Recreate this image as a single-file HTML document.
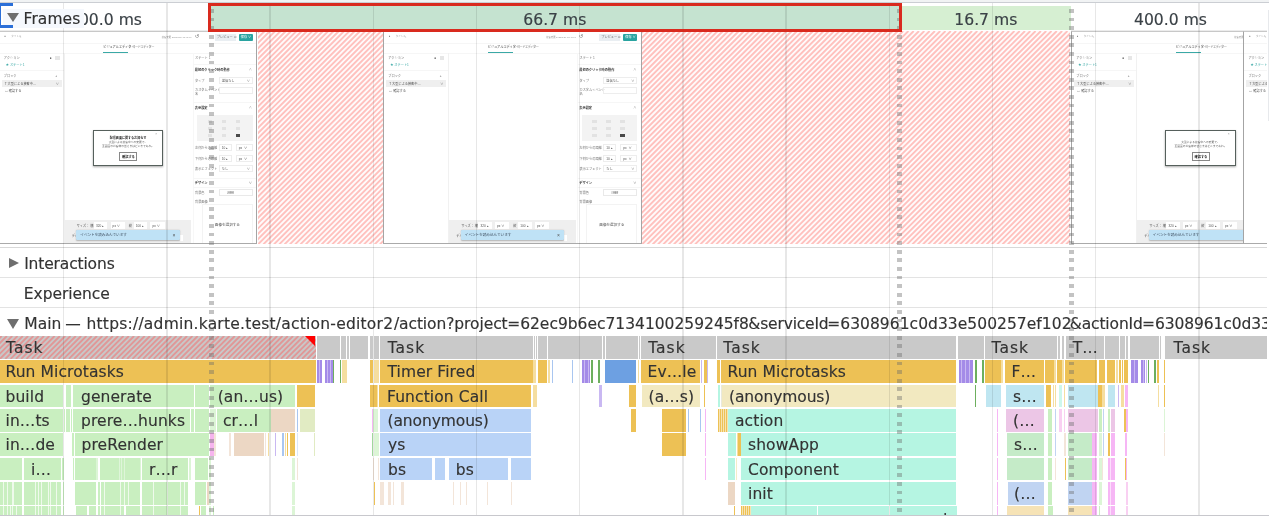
<!DOCTYPE html>
<html lang="ja"><head><meta charset="utf-8"><title>Performance</title>
<style>
html,body{margin:0;padding:0}
body{width:1269px;height:516px;overflow:hidden;position:relative;background:#fff;font-family:"DejaVu Sans","Liberation Sans",sans-serif;font-size:15.5px;color:#333;-webkit-text-stroke:.15px #333}
#r{position:absolute;left:0;top:0;width:1269px;height:516px;overflow:hidden;will-change:transform}
#r div,#r span.a{position:absolute;box-sizing:border-box}
.b{font-size:15.5px;line-height:25.8px;white-space:nowrap;overflow:hidden;letter-spacing:.1px}
.t{white-space:nowrap;line-height:20px;height:20px}
.hatch{background:repeating-linear-gradient(135deg,#fff8f7 0,#fff8f7 .4px,#ffbfba 1.6px,#ffbfba 2.15px,#fff8f7 3.35px,#fff8f7 3.75px)}
.gl{width:1.44px;background:rgba(0,0,0,.095)}
.th{-webkit-text-stroke:0;background:#fff;border:1px solid #a4a4a4;border-top-color:#c8c8c8;border-bottom-color:#aaa;overflow:hidden;font-family:"Liberation Sans","Noto Sans CJK JP",sans-serif;color:#555}
.th div{position:absolute}
.th .x{font-size:3.2px;line-height:4px;white-space:nowrap;color:#777}
</style></head>
<body><div id="r">
<div style="left:0.0px;top:0.0px;width:1269.0px;height:2.0px;background:#f1f3f4;"></div>
<div style="left:0.0px;top:1.9px;width:1269.0px;height:1.0px;background:#cbced3;"></div>
<div style="left:0.0px;top:30.1px;width:208.2px;height:1.0px;background:#ececec;"></div>
<div style="left:1071.0px;top:30.1px;width:198.0px;height:1.0px;background:#ececec;"></div>
<div style="left:208.2px;top:3.2px;width:693.6px;height:28.4px;background:#c5e3d0;"></div>
<div style="left:901.8px;top:6.2px;width:169.0px;height:24.3px;background:#d6efd2;"></div>
<div class="t" style="left:45.5px;width:120px;text-align:center;top:9.9px;font-size:15.6px;letter-spacing:0px;color:#3a4248">100.0 ms</div>
<div class="t" style="left:494.8px;width:120px;text-align:center;top:9.9px;font-size:15.6px;letter-spacing:0px;color:#3a4248">66.7 ms</div>
<div class="t" style="left:925.8px;width:120px;text-align:center;top:9.9px;font-size:15.6px;letter-spacing:0px;color:#3a4248">16.7 ms</div>
<div class="t" style="left:1110.5px;width:120px;text-align:center;top:9.9px;font-size:15.6px;letter-spacing:0px;color:#3a4248">400.0 ms</div>
<svg class="hs" style="position:absolute;left:257.8px;top:30.5px;background:#fffbfb;" width="125.7" height="213.4" viewBox="0 0 125.7 213.4"><path d="M-217.3 213.4l213.4-213.4M-212.0 213.4l213.4-213.4M-206.7 213.4l213.4-213.4M-201.4 213.4l213.4-213.4M-196.1 213.4l213.4-213.4M-190.8 213.4l213.4-213.4M-185.5 213.4l213.4-213.4M-180.2 213.4l213.4-213.4M-174.9 213.4l213.4-213.4M-169.6 213.4l213.4-213.4M-164.3 213.4l213.4-213.4M-159.0 213.4l213.4-213.4M-153.7 213.4l213.4-213.4M-148.4 213.4l213.4-213.4M-143.1 213.4l213.4-213.4M-137.8 213.4l213.4-213.4M-132.5 213.4l213.4-213.4M-127.2 213.4l213.4-213.4M-121.9 213.4l213.4-213.4M-116.6 213.4l213.4-213.4M-111.3 213.4l213.4-213.4M-106.0 213.4l213.4-213.4M-100.7 213.4l213.4-213.4M-95.4 213.4l213.4-213.4M-90.1 213.4l213.4-213.4M-84.8 213.4l213.4-213.4M-79.5 213.4l213.4-213.4M-74.2 213.4l213.4-213.4M-68.9 213.4l213.4-213.4M-63.6 213.4l213.4-213.4M-58.3 213.4l213.4-213.4M-53.0 213.4l213.4-213.4M-47.7 213.4l213.4-213.4M-42.4 213.4l213.4-213.4M-37.1 213.4l213.4-213.4M-31.8 213.4l213.4-213.4M-26.5 213.4l213.4-213.4M-21.2 213.4l213.4-213.4M-15.9 213.4l213.4-213.4M-10.6 213.4l213.4-213.4M-5.3 213.4l213.4-213.4M0.0 213.4l213.4-213.4M5.3 213.4l213.4-213.4M10.6 213.4l213.4-213.4M15.9 213.4l213.4-213.4M21.2 213.4l213.4-213.4M26.5 213.4l213.4-213.4M31.8 213.4l213.4-213.4M37.1 213.4l213.4-213.4M42.4 213.4l213.4-213.4M47.7 213.4l213.4-213.4M53.0 213.4l213.4-213.4M58.3 213.4l213.4-213.4M63.6 213.4l213.4-213.4M68.9 213.4l213.4-213.4M74.2 213.4l213.4-213.4M79.5 213.4l213.4-213.4M84.8 213.4l213.4-213.4M90.1 213.4l213.4-213.4M95.4 213.4l213.4-213.4M100.7 213.4l213.4-213.4M106.0 213.4l213.4-213.4M111.3 213.4l213.4-213.4M116.6 213.4l213.4-213.4M121.9 213.4l213.4-213.4M127.2 213.4l213.4-213.4" stroke="#ffc1be" stroke-width="1.9" fill="none"/></svg>
<svg class="hs" style="position:absolute;left:641.5px;top:30.5px;background:#fffbfb;" width="428.6" height="213.4" viewBox="0 0 428.6 213.4"><path d="M-217.3 213.4l213.4-213.4M-212.0 213.4l213.4-213.4M-206.7 213.4l213.4-213.4M-201.4 213.4l213.4-213.4M-196.1 213.4l213.4-213.4M-190.8 213.4l213.4-213.4M-185.5 213.4l213.4-213.4M-180.2 213.4l213.4-213.4M-174.9 213.4l213.4-213.4M-169.6 213.4l213.4-213.4M-164.3 213.4l213.4-213.4M-159.0 213.4l213.4-213.4M-153.7 213.4l213.4-213.4M-148.4 213.4l213.4-213.4M-143.1 213.4l213.4-213.4M-137.8 213.4l213.4-213.4M-132.5 213.4l213.4-213.4M-127.2 213.4l213.4-213.4M-121.9 213.4l213.4-213.4M-116.6 213.4l213.4-213.4M-111.3 213.4l213.4-213.4M-106.0 213.4l213.4-213.4M-100.7 213.4l213.4-213.4M-95.4 213.4l213.4-213.4M-90.1 213.4l213.4-213.4M-84.8 213.4l213.4-213.4M-79.5 213.4l213.4-213.4M-74.2 213.4l213.4-213.4M-68.9 213.4l213.4-213.4M-63.6 213.4l213.4-213.4M-58.3 213.4l213.4-213.4M-53.0 213.4l213.4-213.4M-47.7 213.4l213.4-213.4M-42.4 213.4l213.4-213.4M-37.1 213.4l213.4-213.4M-31.8 213.4l213.4-213.4M-26.5 213.4l213.4-213.4M-21.2 213.4l213.4-213.4M-15.9 213.4l213.4-213.4M-10.6 213.4l213.4-213.4M-5.3 213.4l213.4-213.4M0.0 213.4l213.4-213.4M5.3 213.4l213.4-213.4M10.6 213.4l213.4-213.4M15.9 213.4l213.4-213.4M21.2 213.4l213.4-213.4M26.5 213.4l213.4-213.4M31.8 213.4l213.4-213.4M37.1 213.4l213.4-213.4M42.4 213.4l213.4-213.4M47.7 213.4l213.4-213.4M53.0 213.4l213.4-213.4M58.3 213.4l213.4-213.4M63.6 213.4l213.4-213.4M68.9 213.4l213.4-213.4M74.2 213.4l213.4-213.4M79.5 213.4l213.4-213.4M84.8 213.4l213.4-213.4M90.1 213.4l213.4-213.4M95.4 213.4l213.4-213.4M100.7 213.4l213.4-213.4M106.0 213.4l213.4-213.4M111.3 213.4l213.4-213.4M116.6 213.4l213.4-213.4M121.9 213.4l213.4-213.4M127.2 213.4l213.4-213.4M132.5 213.4l213.4-213.4M137.8 213.4l213.4-213.4M143.1 213.4l213.4-213.4M148.4 213.4l213.4-213.4M153.7 213.4l213.4-213.4M159.0 213.4l213.4-213.4M164.3 213.4l213.4-213.4M169.6 213.4l213.4-213.4M174.9 213.4l213.4-213.4M180.2 213.4l213.4-213.4M185.5 213.4l213.4-213.4M190.8 213.4l213.4-213.4M196.1 213.4l213.4-213.4M201.4 213.4l213.4-213.4M206.7 213.4l213.4-213.4M212.0 213.4l213.4-213.4M217.3 213.4l213.4-213.4M222.6 213.4l213.4-213.4M227.9 213.4l213.4-213.4M233.2 213.4l213.4-213.4M238.5 213.4l213.4-213.4M243.8 213.4l213.4-213.4M249.1 213.4l213.4-213.4M254.4 213.4l213.4-213.4M259.7 213.4l213.4-213.4M265.0 213.4l213.4-213.4M270.3 213.4l213.4-213.4M275.6 213.4l213.4-213.4M280.9 213.4l213.4-213.4M286.2 213.4l213.4-213.4M291.5 213.4l213.4-213.4M296.8 213.4l213.4-213.4M302.1 213.4l213.4-213.4M307.4 213.4l213.4-213.4M312.7 213.4l213.4-213.4M318.0 213.4l213.4-213.4M323.3 213.4l213.4-213.4M328.6 213.4l213.4-213.4M333.9 213.4l213.4-213.4M339.2 213.4l213.4-213.4M344.5 213.4l213.4-213.4M349.8 213.4l213.4-213.4M355.1 213.4l213.4-213.4M360.4 213.4l213.4-213.4M365.7 213.4l213.4-213.4M371.0 213.4l213.4-213.4M376.3 213.4l213.4-213.4M381.6 213.4l213.4-213.4M386.9 213.4l213.4-213.4M392.2 213.4l213.4-213.4M397.5 213.4l213.4-213.4M402.8 213.4l213.4-213.4M408.1 213.4l213.4-213.4M413.4 213.4l213.4-213.4M418.7 213.4l213.4-213.4M424.0 213.4l213.4-213.4M429.3 213.4l213.4-213.4" stroke="#ffc1be" stroke-width="1.9" fill="none"/></svg>
<div class="th" style="left:-1.2px;top:31px;width:258.4px;height:212.6px"><div style="left:-1px;top:.1px;width:258.4px;height:212.5px;filter:blur(.3px)"><div class="x" style="left:5.5px;top:3px;color:#666;font-size:2.6px">●</div><div class="x" style="left:12.5px;top:3.2px;color:#aaa;font-size:2.5px">タイトル</div><div class="x" style="left:20.5px;top:3px;color:#bbb;font-size:3px">✎</div><div class="x" style="left:163px;top:3.4px;color:#999;font-size:2.3px">接客変更 2022/8/26 18:45:00</div><div class="x" style="left:196.2px;top:2.5px;font-size:4.5px;color:#666">↺</div><div style="left:216px;top:2px;width:21px;height:7px;background:#e9eef2"></div><div class="x" style="left:218px;top:3.3px;color:#666">プレビュー ✉</div><div style="left:239.8px;top:2px;width:14px;height:7px;background:#29a3a0;border-radius:1px"></div><div class="x" style="left:242px;top:3.3px;color:#fff">保存 ∨</div><div style="left:0;top:10.5px;width:258px;height:.6px;background:#f6f6f6"></div><div class="x" style="left:104.5px;top:13.2px;color:#444">ビジュアルエディター</div><div class="x" style="left:133.5px;top:13.2px;color:#777;letter-spacing:-.45px">コードエディター</div><div style="left:104.5px;top:19.6px;width:25px;height:.9px;background:#3aa9a6"></div><div style="left:0;top:21px;width:258px;height:.6px;background:#f6f6f6"></div><div style="left:65px;top:21px;width:.6px;height:191px;background:#f1f1f1"></div><div class="x" style="left:5px;top:24px">アクション</div><div class="x" style="left:51px;top:23.5px;color:#333">●</div><div style="left:56.5px;top:23.5px;width:4.5px;height:4.5px;background:#e6e6e6"></div><div class="x" style="left:7px;top:31.3px;color:#3aa9a6">★ ステート1</div><div style="left:0;top:38.3px;width:65px;height:.6px;background:#f6f6f6"></div><div class="x" style="left:5px;top:42px">ブロック</div><div class="x" style="left:56.5px;top:42px;color:#555">+</div><div style="left:3px;top:48.3px;width:60px;height:6.2px;background:#efefef"></div><div class="x" style="left:6px;top:49.5px;color:#555">T 大型による接客中…</div><div class="x" style="left:57px;top:49.5px">∨</div><div class="x" style="left:6px;top:57px;color:#555">▭ 確認する</div><div style="left:194px;top:21px;width:.6px;height:191px;background:#f7f7f7"></div><div class="x" style="left:196.2px;top:24px">ステート 1</div><div style="left:194px;top:32px;width:64px;height:.6px;background:#f6f6f6"></div><div class="x" style="left:196px;top:36px;color:#333;font-weight:bold">最初のクリック時の動作</div><div class="x" style="left:250px;top:36px">∧</div><div class="x" style="left:196.2px;top:46.5px">タイプ</div><div style="left:220px;top:44.5px;width:34px;height:7px;border:.5px solid #ededed"></div><div class="x" style="left:223px;top:46.5px;color:#555">送信なし</div><div class="x" style="left:248px;top:46.5px">∨</div><div class="x" style="left:196.2px;top:55.5px">カスタムイベント<br>名</div><div style="left:220px;top:54.5px;width:34px;height:7px;border:.5px solid #ededed"></div><div style="left:194px;top:70px;width:64px;height:.6px;background:#f6f6f6"></div><div class="x" style="left:196px;top:74px;color:#333;font-weight:bold">表示設定</div><div class="x" style="left:250px;top:74px">∧</div><div style="left:198.3px;top:83px;width:55.5px;height:26px;background:#f3f3f3"></div><div style="left:209px;top:88px;width:4.5px;height:3px;background:#e2e2e2"></div><div style="left:223px;top:88px;width:4.5px;height:3px;background:#e2e2e2"></div><div style="left:237px;top:88px;width:4.5px;height:3px;background:#e2e2e2"></div><div style="left:209px;top:95px;width:4.5px;height:3px;background:#e2e2e2"></div><div style="left:223px;top:95px;width:4.5px;height:3px;background:#e2e2e2"></div><div style="left:237px;top:95px;width:4.5px;height:3px;background:#e2e2e2"></div><div style="left:209px;top:102px;width:4.5px;height:3px;background:#e2e2e2"></div><div style="left:223px;top:102px;width:4.5px;height:3px;background:#e2e2e2"></div><div style="left:237px;top:102px;width:4.5px;height:3px;background:#4a4a4a"></div><div class="x" style="left:196.2px;top:114px">左側からの距離</div><div style="left:220px;top:112px;width:13px;height:7px;border:.5px solid #ededed"></div><div class="x" style="left:223px;top:114px;color:#555">10 ▴</div><div style="left:237px;top:112px;width:17px;height:7px;border:.5px solid #ededed"></div><div class="x" style="left:240px;top:114px;color:#555">px &nbsp;∨</div><div class="x" style="left:196.2px;top:124.5px">下側からの距離</div><div style="left:220px;top:122.5px;width:13px;height:7px;border:.5px solid #ededed"></div><div class="x" style="left:223px;top:124.5px;color:#555">10 ▴</div><div style="left:237px;top:122.5px;width:17px;height:7px;border:.5px solid #ededed"></div><div class="x" style="left:240px;top:124.5px;color:#555">px &nbsp;∨</div><div class="x" style="left:196.2px;top:135px">表示エフェクト</div><div style="left:220px;top:133px;width:34px;height:7px;border:.5px solid #ededed"></div><div class="x" style="left:223px;top:135px;color:#555">なし</div><div class="x" style="left:248px;top:135px">∨</div><div style="left:194px;top:146px;width:64px;height:.6px;background:#f6f6f6"></div><div class="x" style="left:196px;top:149px;color:#333;font-weight:bold">デザイン</div><div class="x" style="left:250px;top:149px">∨</div><div style="left:194px;top:155px;width:64px;height:.6px;background:#f6f6f6"></div><div class="x" style="left:196.2px;top:159px">背景色</div><div style="left:220px;top:157px;width:34px;height:7px;border:.5px solid #e9e9e9"></div><div class="x" style="left:228px;top:159px;color:#555">#ffffff</div><div class="x" style="left:196.2px;top:168px">背景画像</div><div style="left:203px;top:172px;width:51px;height:45px;border:.5px solid #f3f3f3"></div><div class="x" style="left:216px;top:191px;color:#555;font-size:3.6px">画像を選択する</div><div style="left:65.5px;top:188px;width:127px;height:25px;background:#efefef"></div><div class="x" style="left:78px;top:191.6px;color:#555">サイズ： 横</div><div style="left:95.2px;top:189.6px;width:13.3px;height:7px;background:#fff"></div><div class="x" style="left:97.2px;top:191.6px;color:#555">320 ▴</div><div style="left:111.8px;top:189.6px;width:14.4px;height:7px;background:#fff"></div><div class="x" style="left:113.8px;top:191.6px;color:#555">px ∨</div><div style="left:135px;top:189.6px;width:13.3px;height:7px;background:#fff"></div><div class="x" style="left:137px;top:191.6px;color:#555">100 ▴</div><div style="left:151.6px;top:189.6px;width:14.4px;height:7px;background:#fff"></div><div class="x" style="left:153.6px;top:191.6px;color:#555">px ∨</div><div class="x" style="left:130px;top:191.6px;color:#555">縦</div><div class="x" style="left:73px;top:202px;color:#555">デバイス</div><div style="left:181px;top:202.8px;width:3.2px;height:6.1px;background:#fff"></div><div style="left:77.5px;top:197.7px;width:103.3px;height:9.9px;background:#bfe2f6;border-radius:1.2px;box-shadow:0 .5px 1.5px rgba(0,0,0,.25)"></div><div class="x" style="left:81.5px;top:200.6px;color:#456;font-size:3.6px">イベントを読み込んでいます</div><div class="x" style="left:173.7px;top:199.8px;color:#555;font-size:5px;line-height:6px">×</div><div style="left:94.2px;top:97.8px;width:70.2px;height:36.6px;background:#fff;border:.9px solid #56605c;box-shadow:0 .5px 2px rgba(0,0,0,.35)"></div><div class="x" style="left:156.5px;top:100.2px;color:#999">×</div><div class="x" style="left:94.2px;width:70px;text-align:center;top:103.5px;color:#222;font-weight:bold;font-size:3.05px">配信画面に関するお知らせ</div><div class="x" style="left:94.2px;width:70px;text-align:center;top:109px;color:#666;font-size:2.75px;line-height:3.9px">大型による接客中への変更で、<br>全画面のお客様の皆さまはどこまであれ。</div><div style="left:120.6px;top:120.0px;width:18px;height:8.9px;border:.6px solid #888;background:#fff"></div><div class="x" style="left:120.6px;width:18px;text-align:center;top:122.6px;color:#222;font-weight:bold">確認する</div></div></div>
<div class="th" style="left:383.3px;top:31px;width:258.4px;height:212.6px"><div style="left:-1px;top:.1px;width:258.4px;height:212.5px;filter:blur(.3px)"><div class="x" style="left:5.5px;top:3px;color:#666;font-size:2.6px">●</div><div class="x" style="left:12.5px;top:3.2px;color:#aaa;font-size:2.5px">タイトル</div><div class="x" style="left:20.5px;top:3px;color:#bbb;font-size:3px">✎</div><div class="x" style="left:163px;top:3.4px;color:#999;font-size:2.3px">接客変更 2022/8/26 18:45:00</div><div class="x" style="left:196.2px;top:2.5px;font-size:4.5px;color:#666">↺</div><div style="left:216px;top:2px;width:21px;height:7px;background:#e9eef2"></div><div class="x" style="left:218px;top:3.3px;color:#666">プレビュー ✉</div><div style="left:239.8px;top:2px;width:14px;height:7px;background:#29a3a0;border-radius:1px"></div><div class="x" style="left:242px;top:3.3px;color:#fff">保存 ∨</div><div style="left:0;top:10.5px;width:258px;height:.6px;background:#f6f6f6"></div><div class="x" style="left:104.5px;top:13.2px;color:#444">ビジュアルエディター</div><div class="x" style="left:133.5px;top:13.2px;color:#777;letter-spacing:-.45px">コードエディター</div><div style="left:104.5px;top:19.6px;width:25px;height:.9px;background:#3aa9a6"></div><div style="left:0;top:21px;width:258px;height:.6px;background:#f6f6f6"></div><div style="left:65px;top:21px;width:.6px;height:191px;background:#f1f1f1"></div><div class="x" style="left:5px;top:24px">アクション</div><div class="x" style="left:51px;top:23.5px;color:#333">●</div><div style="left:56.5px;top:23.5px;width:4.5px;height:4.5px;background:#e6e6e6"></div><div class="x" style="left:7px;top:31.3px;color:#3aa9a6">★ ステート1</div><div style="left:0;top:38.3px;width:65px;height:.6px;background:#f6f6f6"></div><div class="x" style="left:5px;top:42px">ブロック</div><div class="x" style="left:56.5px;top:42px;color:#555">+</div><div style="left:3px;top:48.3px;width:60px;height:6.2px;background:#efefef"></div><div class="x" style="left:6px;top:49.5px;color:#555">T 大型による接客中…</div><div class="x" style="left:57px;top:49.5px">∨</div><div class="x" style="left:6px;top:57px;color:#555">▭ 確認する</div><div style="left:194px;top:21px;width:.6px;height:191px;background:#f7f7f7"></div><div class="x" style="left:196.2px;top:24px">ステート 1</div><div style="left:194px;top:32px;width:64px;height:.6px;background:#f6f6f6"></div><div class="x" style="left:196px;top:36px;color:#333;font-weight:bold">最初のクリック時の動作</div><div class="x" style="left:250px;top:36px">∧</div><div class="x" style="left:196.2px;top:46.5px">タイプ</div><div style="left:220px;top:44.5px;width:34px;height:7px;border:.5px solid #ededed"></div><div class="x" style="left:223px;top:46.5px;color:#555">送信なし</div><div class="x" style="left:248px;top:46.5px">∨</div><div class="x" style="left:196.2px;top:55.5px">カスタムイベント<br>名</div><div style="left:220px;top:54.5px;width:34px;height:7px;border:.5px solid #ededed"></div><div style="left:194px;top:70px;width:64px;height:.6px;background:#f6f6f6"></div><div class="x" style="left:196px;top:74px;color:#333;font-weight:bold">表示設定</div><div class="x" style="left:250px;top:74px">∧</div><div style="left:198.3px;top:83px;width:55.5px;height:26px;background:#f3f3f3"></div><div style="left:209px;top:88px;width:4.5px;height:3px;background:#e2e2e2"></div><div style="left:223px;top:88px;width:4.5px;height:3px;background:#e2e2e2"></div><div style="left:237px;top:88px;width:4.5px;height:3px;background:#e2e2e2"></div><div style="left:209px;top:95px;width:4.5px;height:3px;background:#e2e2e2"></div><div style="left:223px;top:95px;width:4.5px;height:3px;background:#e2e2e2"></div><div style="left:237px;top:95px;width:4.5px;height:3px;background:#e2e2e2"></div><div style="left:209px;top:102px;width:4.5px;height:3px;background:#e2e2e2"></div><div style="left:223px;top:102px;width:4.5px;height:3px;background:#e2e2e2"></div><div style="left:237px;top:102px;width:4.5px;height:3px;background:#4a4a4a"></div><div class="x" style="left:196.2px;top:114px">左側からの距離</div><div style="left:220px;top:112px;width:13px;height:7px;border:.5px solid #ededed"></div><div class="x" style="left:223px;top:114px;color:#555">10 ▴</div><div style="left:237px;top:112px;width:17px;height:7px;border:.5px solid #ededed"></div><div class="x" style="left:240px;top:114px;color:#555">px &nbsp;∨</div><div class="x" style="left:196.2px;top:124.5px">下側からの距離</div><div style="left:220px;top:122.5px;width:13px;height:7px;border:.5px solid #ededed"></div><div class="x" style="left:223px;top:124.5px;color:#555">10 ▴</div><div style="left:237px;top:122.5px;width:17px;height:7px;border:.5px solid #ededed"></div><div class="x" style="left:240px;top:124.5px;color:#555">px &nbsp;∨</div><div class="x" style="left:196.2px;top:135px">表示エフェクト</div><div style="left:220px;top:133px;width:34px;height:7px;border:.5px solid #ededed"></div><div class="x" style="left:223px;top:135px;color:#555">なし</div><div class="x" style="left:248px;top:135px">∨</div><div style="left:194px;top:146px;width:64px;height:.6px;background:#f6f6f6"></div><div class="x" style="left:196px;top:149px;color:#333;font-weight:bold">デザイン</div><div class="x" style="left:250px;top:149px">∨</div><div style="left:194px;top:155px;width:64px;height:.6px;background:#f6f6f6"></div><div class="x" style="left:196.2px;top:159px">背景色</div><div style="left:220px;top:157px;width:34px;height:7px;border:.5px solid #e9e9e9"></div><div class="x" style="left:228px;top:159px;color:#555">#ffffff</div><div class="x" style="left:196.2px;top:168px">背景画像</div><div style="left:203px;top:172px;width:51px;height:45px;border:.5px solid #f3f3f3"></div><div class="x" style="left:216px;top:191px;color:#555;font-size:3.6px">画像を選択する</div><div style="left:65.5px;top:188px;width:127px;height:25px;background:#efefef"></div><div class="x" style="left:78px;top:191.6px;color:#555">サイズ： 横</div><div style="left:95.2px;top:189.6px;width:13.3px;height:7px;background:#fff"></div><div class="x" style="left:97.2px;top:191.6px;color:#555">320 ▴</div><div style="left:111.8px;top:189.6px;width:14.4px;height:7px;background:#fff"></div><div class="x" style="left:113.8px;top:191.6px;color:#555">px ∨</div><div style="left:135px;top:189.6px;width:13.3px;height:7px;background:#fff"></div><div class="x" style="left:137px;top:191.6px;color:#555">100 ▴</div><div style="left:151.6px;top:189.6px;width:14.4px;height:7px;background:#fff"></div><div class="x" style="left:153.6px;top:191.6px;color:#555">px ∨</div><div class="x" style="left:130px;top:191.6px;color:#555">縦</div><div class="x" style="left:73px;top:202px;color:#555">デバイス</div><div style="left:181px;top:202.8px;width:3.2px;height:6.1px;background:#fff"></div><div style="left:77.5px;top:197.7px;width:103.3px;height:9.9px;background:#bfe2f6;border-radius:1.2px;box-shadow:0 .5px 1.5px rgba(0,0,0,.25)"></div><div class="x" style="left:81.5px;top:200.6px;color:#456;font-size:3.6px">イベントを読み込んでいます</div><div class="x" style="left:173.7px;top:199.8px;color:#555;font-size:5px;line-height:6px">×</div></div></div>
<div class="th" style="left:1071.3px;top:31px;width:258.4px;height:212.6px"><div style="left:-1px;top:.1px;width:258.4px;height:212.5px;filter:blur(.3px)"><div class="x" style="left:5.5px;top:3px;color:#666;font-size:2.6px">●</div><div class="x" style="left:12.5px;top:3.2px;color:#aaa;font-size:2.5px">タイトル</div><div class="x" style="left:20.5px;top:3px;color:#bbb;font-size:3px">✎</div><div class="x" style="left:163px;top:3.4px;color:#999;font-size:2.3px">接客変更 2022/8/26 18:45:00</div><div class="x" style="left:196.2px;top:2.5px;font-size:4.5px;color:#666">↺</div><div style="left:216px;top:2px;width:21px;height:7px;background:#e9eef2"></div><div class="x" style="left:218px;top:3.3px;color:#666">プレビュー ✉</div><div style="left:239.8px;top:2px;width:14px;height:7px;background:#29a3a0;border-radius:1px"></div><div class="x" style="left:242px;top:3.3px;color:#fff">保存 ∨</div><div style="left:0;top:10.5px;width:258px;height:.6px;background:#f6f6f6"></div><div class="x" style="left:104.5px;top:13.2px;color:#444">ビジュアルエディター</div><div class="x" style="left:133.5px;top:13.2px;color:#777;letter-spacing:-.45px">コードエディター</div><div style="left:104.5px;top:19.6px;width:25px;height:.9px;background:#3aa9a6"></div><div style="left:0;top:21px;width:258px;height:.6px;background:#f6f6f6"></div><div style="left:65px;top:21px;width:.6px;height:191px;background:#f1f1f1"></div><div class="x" style="left:5px;top:24px">アクション</div><div class="x" style="left:51px;top:23.5px;color:#333">●</div><div style="left:56.5px;top:23.5px;width:4.5px;height:4.5px;background:#e6e6e6"></div><div class="x" style="left:7px;top:31.3px;color:#3aa9a6">★ ステート1</div><div style="left:0;top:38.3px;width:65px;height:.6px;background:#f6f6f6"></div><div class="x" style="left:5px;top:42px">ブロック</div><div class="x" style="left:56.5px;top:42px;color:#555">+</div><div style="left:3px;top:48.3px;width:60px;height:6.2px;background:#efefef"></div><div class="x" style="left:6px;top:49.5px;color:#555">T 大型による接客中…</div><div class="x" style="left:57px;top:49.5px">∨</div><div class="x" style="left:6px;top:57px;color:#555">▭ 確認する</div><div style="left:194px;top:21px;width:.6px;height:191px;background:#f7f7f7"></div><div class="x" style="left:196.2px;top:24px">ステート 1</div><div style="left:194px;top:32px;width:64px;height:.6px;background:#f6f6f6"></div><div class="x" style="left:196px;top:36px;color:#333;font-weight:bold">最初のクリック時の動作</div><div class="x" style="left:250px;top:36px">∧</div><div class="x" style="left:196.2px;top:46.5px">タイプ</div><div style="left:220px;top:44.5px;width:34px;height:7px;border:.5px solid #ededed"></div><div class="x" style="left:223px;top:46.5px;color:#555">送信なし</div><div class="x" style="left:248px;top:46.5px">∨</div><div class="x" style="left:196.2px;top:55.5px">カスタムイベント<br>名</div><div style="left:220px;top:54.5px;width:34px;height:7px;border:.5px solid #ededed"></div><div style="left:194px;top:70px;width:64px;height:.6px;background:#f6f6f6"></div><div class="x" style="left:196px;top:74px;color:#333;font-weight:bold">表示設定</div><div class="x" style="left:250px;top:74px">∧</div><div style="left:198.3px;top:83px;width:55.5px;height:26px;background:#f3f3f3"></div><div style="left:209px;top:88px;width:4.5px;height:3px;background:#e2e2e2"></div><div style="left:223px;top:88px;width:4.5px;height:3px;background:#e2e2e2"></div><div style="left:237px;top:88px;width:4.5px;height:3px;background:#e2e2e2"></div><div style="left:209px;top:95px;width:4.5px;height:3px;background:#e2e2e2"></div><div style="left:223px;top:95px;width:4.5px;height:3px;background:#e2e2e2"></div><div style="left:237px;top:95px;width:4.5px;height:3px;background:#e2e2e2"></div><div style="left:209px;top:102px;width:4.5px;height:3px;background:#e2e2e2"></div><div style="left:223px;top:102px;width:4.5px;height:3px;background:#e2e2e2"></div><div style="left:237px;top:102px;width:4.5px;height:3px;background:#4a4a4a"></div><div class="x" style="left:196.2px;top:114px">左側からの距離</div><div style="left:220px;top:112px;width:13px;height:7px;border:.5px solid #ededed"></div><div class="x" style="left:223px;top:114px;color:#555">10 ▴</div><div style="left:237px;top:112px;width:17px;height:7px;border:.5px solid #ededed"></div><div class="x" style="left:240px;top:114px;color:#555">px &nbsp;∨</div><div class="x" style="left:196.2px;top:124.5px">下側からの距離</div><div style="left:220px;top:122.5px;width:13px;height:7px;border:.5px solid #ededed"></div><div class="x" style="left:223px;top:124.5px;color:#555">10 ▴</div><div style="left:237px;top:122.5px;width:17px;height:7px;border:.5px solid #ededed"></div><div class="x" style="left:240px;top:124.5px;color:#555">px &nbsp;∨</div><div class="x" style="left:196.2px;top:135px">表示エフェクト</div><div style="left:220px;top:133px;width:34px;height:7px;border:.5px solid #ededed"></div><div class="x" style="left:223px;top:135px;color:#555">なし</div><div class="x" style="left:248px;top:135px">∨</div><div style="left:194px;top:146px;width:64px;height:.6px;background:#f6f6f6"></div><div class="x" style="left:196px;top:149px;color:#333;font-weight:bold">デザイン</div><div class="x" style="left:250px;top:149px">∨</div><div style="left:194px;top:155px;width:64px;height:.6px;background:#f6f6f6"></div><div class="x" style="left:196.2px;top:159px">背景色</div><div style="left:220px;top:157px;width:34px;height:7px;border:.5px solid #e9e9e9"></div><div class="x" style="left:228px;top:159px;color:#555">#ffffff</div><div class="x" style="left:196.2px;top:168px">背景画像</div><div style="left:203px;top:172px;width:51px;height:45px;border:.5px solid #f3f3f3"></div><div class="x" style="left:216px;top:191px;color:#555;font-size:3.6px">画像を選択する</div><div style="left:65.5px;top:188px;width:127px;height:25px;background:#efefef"></div><div class="x" style="left:78px;top:191.6px;color:#555">サイズ： 横</div><div style="left:95.2px;top:189.6px;width:13.3px;height:7px;background:#fff"></div><div class="x" style="left:97.2px;top:191.6px;color:#555">320 ▴</div><div style="left:111.8px;top:189.6px;width:14.4px;height:7px;background:#fff"></div><div class="x" style="left:113.8px;top:191.6px;color:#555">px ∨</div><div style="left:135px;top:189.6px;width:13.3px;height:7px;background:#fff"></div><div class="x" style="left:137px;top:191.6px;color:#555">100 ▴</div><div style="left:151.6px;top:189.6px;width:14.4px;height:7px;background:#fff"></div><div class="x" style="left:153.6px;top:191.6px;color:#555">px ∨</div><div class="x" style="left:130px;top:191.6px;color:#555">縦</div><div class="x" style="left:73px;top:202px;color:#555">デバイス</div><div style="left:181px;top:202.8px;width:3.2px;height:6.1px;background:#fff"></div><div style="left:77.5px;top:197.7px;width:103.3px;height:9.9px;background:#bfe2f6;border-radius:1.2px;box-shadow:0 .5px 1.5px rgba(0,0,0,.25)"></div><div class="x" style="left:81.5px;top:200.6px;color:#456;font-size:3.6px">イベントを読み込んでいます</div><div class="x" style="left:173.7px;top:199.8px;color:#555;font-size:5px;line-height:6px">×</div><div style="left:94.2px;top:97.8px;width:70.2px;height:36.6px;background:#fff;border:.9px solid #56605c;box-shadow:0 .5px 2px rgba(0,0,0,.35)"></div><div class="x" style="left:156.5px;top:100.2px;color:#999">×</div><div class="x" style="left:94.2px;width:70px;text-align:center;top:109px;color:#666;font-size:2.75px;line-height:3.9px">大型による接客中への変更で、<br>全画面のお客様の皆さまはどこまであれ。</div><div style="left:120.6px;top:120.0px;width:18px;height:8.9px;border:.6px solid #888;background:#fff"></div><div class="x" style="left:120.6px;width:18px;text-align:center;top:122.6px;color:#222;font-weight:bold">確認する</div></div></div>
<div class="th" style="left:1243.4px;top:31px;width:258.4px;height:212.6px"><div style="left:-1px;top:.1px;width:258.4px;height:212.5px;filter:blur(.3px)"><div class="x" style="left:5.5px;top:3px;color:#666;font-size:2.6px">●</div><div class="x" style="left:12.5px;top:3.2px;color:#aaa;font-size:2.5px">タイトル</div><div class="x" style="left:20.5px;top:3px;color:#bbb;font-size:3px">✎</div><div class="x" style="left:163px;top:3.4px;color:#999;font-size:2.3px">接客変更 2022/8/26 18:45:00</div><div class="x" style="left:196.2px;top:2.5px;font-size:4.5px;color:#666">↺</div><div style="left:216px;top:2px;width:21px;height:7px;background:#e9eef2"></div><div class="x" style="left:218px;top:3.3px;color:#666">プレビュー ✉</div><div style="left:239.8px;top:2px;width:14px;height:7px;background:#29a3a0;border-radius:1px"></div><div class="x" style="left:242px;top:3.3px;color:#fff">保存 ∨</div><div style="left:0;top:10.5px;width:258px;height:.6px;background:#f6f6f6"></div><div class="x" style="left:104.5px;top:13.2px;color:#444">ビジュアルエディター</div><div class="x" style="left:133.5px;top:13.2px;color:#777;letter-spacing:-.45px">コードエディター</div><div style="left:104.5px;top:19.6px;width:25px;height:.9px;background:#3aa9a6"></div><div style="left:0;top:21px;width:258px;height:.6px;background:#f6f6f6"></div><div style="left:65px;top:21px;width:.6px;height:191px;background:#f1f1f1"></div><div class="x" style="left:5px;top:24px">アクション</div><div class="x" style="left:51px;top:23.5px;color:#333">●</div><div style="left:56.5px;top:23.5px;width:4.5px;height:4.5px;background:#e6e6e6"></div><div class="x" style="left:7px;top:31.3px;color:#3aa9a6">★ ステート1</div><div style="left:0;top:38.3px;width:65px;height:.6px;background:#f6f6f6"></div><div class="x" style="left:5px;top:42px">ブロック</div><div class="x" style="left:56.5px;top:42px;color:#555">+</div><div style="left:3px;top:48.3px;width:60px;height:6.2px;background:#efefef"></div><div class="x" style="left:6px;top:49.5px;color:#555">T 大型による接客中…</div><div class="x" style="left:57px;top:49.5px">∨</div><div class="x" style="left:6px;top:57px;color:#555">▭ 確認する</div><div style="left:194px;top:21px;width:.6px;height:191px;background:#f7f7f7"></div><div class="x" style="left:196.2px;top:24px">ステート 1</div><div style="left:194px;top:32px;width:64px;height:.6px;background:#f6f6f6"></div><div class="x" style="left:196px;top:36px;color:#333;font-weight:bold">最初のクリック時の動作</div><div class="x" style="left:250px;top:36px">∧</div><div class="x" style="left:196.2px;top:46.5px">タイプ</div><div style="left:220px;top:44.5px;width:34px;height:7px;border:.5px solid #ededed"></div><div class="x" style="left:223px;top:46.5px;color:#555">送信なし</div><div class="x" style="left:248px;top:46.5px">∨</div><div class="x" style="left:196.2px;top:55.5px">カスタムイベント<br>名</div><div style="left:220px;top:54.5px;width:34px;height:7px;border:.5px solid #ededed"></div><div style="left:194px;top:70px;width:64px;height:.6px;background:#f6f6f6"></div><div class="x" style="left:196px;top:74px;color:#333;font-weight:bold">表示設定</div><div class="x" style="left:250px;top:74px">∧</div><div style="left:198.3px;top:83px;width:55.5px;height:26px;background:#f3f3f3"></div><div style="left:209px;top:88px;width:4.5px;height:3px;background:#e2e2e2"></div><div style="left:223px;top:88px;width:4.5px;height:3px;background:#e2e2e2"></div><div style="left:237px;top:88px;width:4.5px;height:3px;background:#e2e2e2"></div><div style="left:209px;top:95px;width:4.5px;height:3px;background:#e2e2e2"></div><div style="left:223px;top:95px;width:4.5px;height:3px;background:#e2e2e2"></div><div style="left:237px;top:95px;width:4.5px;height:3px;background:#e2e2e2"></div><div style="left:209px;top:102px;width:4.5px;height:3px;background:#e2e2e2"></div><div style="left:223px;top:102px;width:4.5px;height:3px;background:#e2e2e2"></div><div style="left:237px;top:102px;width:4.5px;height:3px;background:#4a4a4a"></div><div class="x" style="left:196.2px;top:114px">左側からの距離</div><div style="left:220px;top:112px;width:13px;height:7px;border:.5px solid #ededed"></div><div class="x" style="left:223px;top:114px;color:#555">10 ▴</div><div style="left:237px;top:112px;width:17px;height:7px;border:.5px solid #ededed"></div><div class="x" style="left:240px;top:114px;color:#555">px &nbsp;∨</div><div class="x" style="left:196.2px;top:124.5px">下側からの距離</div><div style="left:220px;top:122.5px;width:13px;height:7px;border:.5px solid #ededed"></div><div class="x" style="left:223px;top:124.5px;color:#555">10 ▴</div><div style="left:237px;top:122.5px;width:17px;height:7px;border:.5px solid #ededed"></div><div class="x" style="left:240px;top:124.5px;color:#555">px &nbsp;∨</div><div class="x" style="left:196.2px;top:135px">表示エフェクト</div><div style="left:220px;top:133px;width:34px;height:7px;border:.5px solid #ededed"></div><div class="x" style="left:223px;top:135px;color:#555">なし</div><div class="x" style="left:248px;top:135px">∨</div><div style="left:194px;top:146px;width:64px;height:.6px;background:#f6f6f6"></div><div class="x" style="left:196px;top:149px;color:#333;font-weight:bold">デザイン</div><div class="x" style="left:250px;top:149px">∨</div><div style="left:194px;top:155px;width:64px;height:.6px;background:#f6f6f6"></div><div class="x" style="left:196.2px;top:159px">背景色</div><div style="left:220px;top:157px;width:34px;height:7px;border:.5px solid #e9e9e9"></div><div class="x" style="left:228px;top:159px;color:#555">#ffffff</div><div class="x" style="left:196.2px;top:168px">背景画像</div><div style="left:203px;top:172px;width:51px;height:45px;border:.5px solid #f3f3f3"></div><div class="x" style="left:216px;top:191px;color:#555;font-size:3.6px">画像を選択する</div><div style="left:65.5px;top:188px;width:127px;height:25px;background:#efefef"></div><div class="x" style="left:78px;top:191.6px;color:#555">サイズ： 横</div><div style="left:95.2px;top:189.6px;width:13.3px;height:7px;background:#fff"></div><div class="x" style="left:97.2px;top:191.6px;color:#555">320 ▴</div><div style="left:111.8px;top:189.6px;width:14.4px;height:7px;background:#fff"></div><div class="x" style="left:113.8px;top:191.6px;color:#555">px ∨</div><div style="left:135px;top:189.6px;width:13.3px;height:7px;background:#fff"></div><div class="x" style="left:137px;top:191.6px;color:#555">100 ▴</div><div style="left:151.6px;top:189.6px;width:14.4px;height:7px;background:#fff"></div><div class="x" style="left:153.6px;top:191.6px;color:#555">px ∨</div><div class="x" style="left:130px;top:191.6px;color:#555">縦</div><div class="x" style="left:73px;top:202px;color:#555">デバイス</div><div style="left:181px;top:202.8px;width:3.2px;height:6.1px;background:#fff"></div><div style="left:77.5px;top:197.7px;width:103.3px;height:9.9px;background:#bfe2f6;border-radius:1.2px;box-shadow:0 .5px 1.5px rgba(0,0,0,.25)"></div><div class="x" style="left:81.5px;top:200.6px;color:#456;font-size:3.6px">イベントを読み込んでいます</div><div class="x" style="left:173.7px;top:199.8px;color:#555;font-size:5px;line-height:6px">×</div><div style="left:94.2px;top:97.8px;width:70.2px;height:36.6px;background:#fff;border:.9px solid #56605c;box-shadow:0 .5px 2px rgba(0,0,0,.35)"></div><div class="x" style="left:156.5px;top:100.2px;color:#999">×</div><div class="x" style="left:94.2px;width:70px;text-align:center;top:109px;color:#666;font-size:2.75px;line-height:3.9px">大型による接客中への変更で、<br>全画面のお客様の皆さまはどこまであれ。</div><div style="left:120.6px;top:120.0px;width:18px;height:8.9px;border:.6px solid #888;background:#fff"></div><div class="x" style="left:120.6px;width:18px;text-align:center;top:122.6px;color:#222;font-weight:bold">確認する</div></div></div>
<div style="left:0.0px;top:243.6px;width:1269.0px;height:3.2px;background:#fff;"></div>
<div style="left:0.0px;top:247.0px;width:1269.0px;height:1.0px;background:#dedede;"></div>
<div style="left:0.0px;top:277.0px;width:1269.0px;height:1.0px;background:#dedede;"></div>
<div style="left:0.0px;top:307.0px;width:1269.0px;height:1.0px;background:#dedede;"></div>
<div style="left:0.0px;top:248.0px;width:1269.0px;height:88.0px;background:#fff;"></div>
<div style="left:0.0px;top:277.0px;width:1269.0px;height:1.0px;background:#e3e3e3;"></div>
<div style="left:0.0px;top:307.0px;width:1269.0px;height:1.0px;background:#e3e3e3;"></div>
<div style="left:0.0px;top:246.8px;width:1269.0px;height:1.0px;background:#d8d8d8;"></div>
<div style="left:8.9px;top:258.1px;width:0;height:0;border-left:10px solid #6e6e6e;border-top:5.2px solid transparent;border-bottom:5.2px solid transparent"></div>
<div class="t" style="left:24.2px;top:254px;letter-spacing:-.15px">Interactions</div>
<div class="t" style="left:23.8px;top:284px;letter-spacing:-.05px">Experience</div>
<div style="left:7.0px;top:318.5px;width:0;height:0;border-top:10.2px solid #6e6e6e;border-left:6.2px solid transparent;border-right:6.2px solid transparent"></div>
<div class="t" id="main" style="left:0;top:314.2px;width:1400px;font-size:15.5px"><span class="a" style="left:24.2px;letter-spacing:0.067px">Main</span><span class="a" style="left:65.2px;letter-spacing:0.000px">—</span><span class="a" style="left:86.5px;letter-spacing:0.226px">https://admin.karte.test/action-editor2</span><span class="a" style="left:393.9px;letter-spacing:-0.086px">/action?project</span><span class="a" style="left:507.2px;letter-spacing:-0.008px">=62ec9b6ec7134100259245f8</span><span class="a" style="left:748.3px;letter-spacing:-0.178px">&amp;serviceId</span><span class="a" style="left:827.2px;letter-spacing:0.046px">=6308961c0d33e500257ef102</span><span class="a" style="left:1069.7px;letter-spacing:-0.125px">&amp;actionId</span><span class="a" style="left:1142.0px;letter-spacing:-0.083px">=6308961c0d33</span></div>
<svg class="hs" style="position:absolute;left:0.0px;top:335.9px;background:#c9c8c8;" width="315.8" height="22.8" viewBox="0 0 315.8 22.8"><path d="M-26.5 22.8l22.8-22.8M-21.2 22.8l22.8-22.8M-15.9 22.8l22.8-22.8M-10.6 22.8l22.8-22.8M-5.3 22.8l22.8-22.8M0.0 22.8l22.8-22.8M5.3 22.8l22.8-22.8M10.6 22.8l22.8-22.8M15.9 22.8l22.8-22.8M21.2 22.8l22.8-22.8M26.5 22.8l22.8-22.8M31.8 22.8l22.8-22.8M37.1 22.8l22.8-22.8M42.4 22.8l22.8-22.8M47.7 22.8l22.8-22.8M53.0 22.8l22.8-22.8M58.3 22.8l22.8-22.8M63.6 22.8l22.8-22.8M68.9 22.8l22.8-22.8M74.2 22.8l22.8-22.8M79.5 22.8l22.8-22.8M84.8 22.8l22.8-22.8M90.1 22.8l22.8-22.8M95.4 22.8l22.8-22.8M100.7 22.8l22.8-22.8M106.0 22.8l22.8-22.8M111.3 22.8l22.8-22.8M116.6 22.8l22.8-22.8M121.9 22.8l22.8-22.8M127.2 22.8l22.8-22.8M132.5 22.8l22.8-22.8M137.8 22.8l22.8-22.8M143.1 22.8l22.8-22.8M148.4 22.8l22.8-22.8M153.7 22.8l22.8-22.8M159.0 22.8l22.8-22.8M164.3 22.8l22.8-22.8M169.6 22.8l22.8-22.8M174.9 22.8l22.8-22.8M180.2 22.8l22.8-22.8M185.5 22.8l22.8-22.8M190.8 22.8l22.8-22.8M196.1 22.8l22.8-22.8M201.4 22.8l22.8-22.8M206.7 22.8l22.8-22.8M212.0 22.8l22.8-22.8M217.3 22.8l22.8-22.8M222.6 22.8l22.8-22.8M227.9 22.8l22.8-22.8M233.2 22.8l22.8-22.8M238.5 22.8l22.8-22.8M243.8 22.8l22.8-22.8M249.1 22.8l22.8-22.8M254.4 22.8l22.8-22.8M259.7 22.8l22.8-22.8M265.0 22.8l22.8-22.8M270.3 22.8l22.8-22.8M275.6 22.8l22.8-22.8M280.9 22.8l22.8-22.8M286.2 22.8l22.8-22.8M291.5 22.8l22.8-22.8M296.8 22.8l22.8-22.8M302.1 22.8l22.8-22.8M307.4 22.8l22.8-22.8M312.7 22.8l22.8-22.8M318.0 22.8l22.8-22.8" stroke="#e09797" stroke-width="1.9" fill="none"/></svg>
<div class="b" style="left:0;top:335.9px;width:315.8px;height:22.8px;padding-left:6px;letter-spacing:1px">Task</div>
<div style="left:305.3px;top:335.9px;width:0;height:0;border-top:10.5px solid #f00;border-left:10.5px solid transparent"></div>
<div style="left:316.5px;top:335.9px;width:23.8px;height:22.8px;background:#c9c9c9;"></div>
<div style="left:341.0px;top:335.9px;width:1.5px;height:22.8px;background:#c9c9c9;"></div>
<div style="left:343.2px;top:335.9px;width:2.6px;height:22.8px;background:#c9c9c9;"></div>
<div style="left:346.8px;top:335.9px;width:2.2px;height:22.8px;background:#c9c9c9;"></div>
<div style="left:349.8px;top:335.9px;width:18.1px;height:22.8px;background:#c9c9c9;"></div>
<div style="left:369.9px;top:335.9px;width:3.0px;height:22.8px;background:#c9c9c9;"></div>
<div style="left:373.7px;top:335.9px;width:5.0px;height:22.8px;background:#c9c9c9;"></div>
<div class="b" style="left:379.7px;top:335.9px;width:152.9px;height:22.8px;background:#c9c9c9;padding-left:8.0px;letter-spacing:1.0px">Task</div>
<div style="left:533.5px;top:335.9px;width:1.5px;height:22.8px;background:#c9c9c9;"></div>
<div style="left:535.8px;top:335.9px;width:1.4px;height:22.8px;background:#c9c9c9;"></div>
<div style="left:538.0px;top:335.9px;width:9.0px;height:22.8px;background:#c9c9c9;"></div>
<div style="left:548.0px;top:335.9px;width:53.5px;height:22.8px;background:#c9c9c9;"></div>
<div style="left:602.5px;top:335.9px;width:2.0px;height:22.8px;background:#c9c9c9;"></div>
<div style="left:605.5px;top:335.9px;width:32.5px;height:22.8px;background:#c9c9c9;"></div>
<div style="left:639.0px;top:335.9px;width:1.2px;height:22.8px;background:#c9c9c9;"></div>
<div class="b" style="left:641.0px;top:335.9px;width:74.5px;height:22.8px;background:#c9c9c9;padding-left:7.2px;letter-spacing:1.0px">Task</div>
<div class="b" style="left:716.5px;top:335.9px;width:239.0px;height:22.8px;background:#c9c9c9;padding-left:6.8px;letter-spacing:1.0px">Task</div>
<div style="left:957.5px;top:335.9px;width:26.0px;height:22.8px;background:#c9c9c9;"></div>
<div class="b" style="left:985.0px;top:335.9px;width:71.5px;height:22.8px;background:#c9c9c9;padding-left:6.5px;letter-spacing:1.0px">Task</div>
<div style="left:1057.8px;top:335.9px;width:2.7px;height:22.8px;background:#c9c9c9;"></div>
<div style="left:1061.5px;top:335.9px;width:2.8px;height:22.8px;background:#c9c9c9;"></div>
<div class="b" style="left:1065.5px;top:335.9px;width:38.5px;height:22.8px;background:#c9c9c9;padding-left:7.2px">T…</div>
<div style="left:1105.0px;top:335.9px;width:11.5px;height:22.8px;background:#c9c9c9;"></div>
<div style="left:1117.3px;top:335.9px;width:1.7px;height:22.8px;background:#c9c9c9;"></div>
<div style="left:1120.0px;top:335.9px;width:2.5px;height:22.8px;background:#c9c9c9;"></div>
<div style="left:1123.3px;top:335.9px;width:1.7px;height:22.8px;background:#c9c9c9;"></div>
<div style="left:1125.8px;top:335.9px;width:2.7px;height:22.8px;background:#c9c9c9;"></div>
<div style="left:1129.5px;top:335.9px;width:27.0px;height:22.8px;background:#c9c9c9;"></div>
<div style="left:1157.3px;top:335.9px;width:1.7px;height:22.8px;background:#c9c9c9;"></div>
<div style="left:1159.8px;top:335.9px;width:1.7px;height:22.8px;background:#c9c9c9;"></div>
<div class="b" style="left:1164.5px;top:335.9px;width:102.0px;height:22.8px;background:#c9c9c9;padding-left:9.1px;letter-spacing:1.0px">Task</div>
<div class="b" style="left:0.0px;top:360.2px;width:315.8px;height:22.8px;background:#edc155;padding-left:5.5px">Run Microtasks</div>
<div style="left:317.2px;top:360.2px;width:1.8px;height:22.8px;background:#a48be8;"></div>
<div style="left:319.0px;top:360.2px;width:1.0px;height:22.8px;background:#c9b8f2;"></div>
<div style="left:320.0px;top:360.2px;width:2.1px;height:22.8px;background:#a48be8;"></div>
<div style="left:325.0px;top:360.2px;width:2.0px;height:22.8px;background:#a48be8;"></div>
<div style="left:327.0px;top:360.2px;width:1.0px;height:22.8px;background:#c9b8f2;"></div>
<div style="left:328.0px;top:360.2px;width:2.0px;height:22.8px;background:#a48be8;"></div>
<div style="left:330.0px;top:360.2px;width:1.0px;height:22.8px;background:#c9b8f2;"></div>
<div style="left:331.0px;top:360.2px;width:1.6px;height:22.8px;background:#a48be8;"></div>
<div style="left:333.0px;top:360.2px;width:1.0px;height:22.8px;background:#6daf5e;"></div>
<div style="left:339.5px;top:360.2px;width:1.1px;height:22.8px;background:#6daf5e;"></div>
<div style="left:341.5px;top:360.2px;width:2.0px;height:22.8px;background:#f5dea0;"></div>
<div style="left:344.0px;top:360.2px;width:2.5px;height:22.8px;background:#f5dea0;"></div>
<div style="left:370.0px;top:360.2px;width:3.0px;height:22.8px;background:#edc155;"></div>
<div style="left:373.7px;top:360.2px;width:5.0px;height:22.8px;background:#f5dea0;"></div>
<div class="b" style="left:379.7px;top:360.2px;width:152.9px;height:22.8px;background:#edc155;padding-left:7.8px">Timer Fired</div>
<div style="left:533.3px;top:360.2px;width:3.2px;height:22.8px;background:#f5dea0;"></div>
<div style="left:537.5px;top:360.2px;width:9.5px;height:22.8px;background:#edc155;"></div>
<div style="left:548.3px;top:360.2px;width:1.7px;height:22.8px;background:#f5dea0;"></div>
<div style="left:551.8px;top:360.2px;width:1.0px;height:22.8px;background:#a9c6f0;"></div>
<div style="left:572.0px;top:360.2px;width:1.0px;height:22.8px;background:#a9c6f0;"></div>
<div style="left:582.0px;top:360.2px;width:2.0px;height:22.8px;background:#a48be8;"></div>
<div style="left:584.0px;top:360.2px;width:1.0px;height:22.8px;background:#c9b8f2;"></div>
<div style="left:585.0px;top:360.2px;width:3.0px;height:22.8px;background:#a48be8;"></div>
<div style="left:588.0px;top:360.2px;width:1.0px;height:22.8px;background:#c9b8f2;"></div>
<div style="left:589.0px;top:360.2px;width:1.3px;height:22.8px;background:#a48be8;"></div>
<div style="left:590.7px;top:360.2px;width:2.3px;height:22.8px;background:#6daf5e;"></div>
<div style="left:597.6px;top:360.2px;width:2.4px;height:22.8px;background:#6daf5e;"></div>
<div style="left:605.3px;top:360.2px;width:30.7px;height:22.8px;background:#6da0e2;"></div>
<div style="left:637.5px;top:360.2px;width:1.5px;height:22.8px;background:#f5dea0;"></div>
<div class="b" style="left:641.0px;top:360.2px;width:59.0px;height:22.8px;background:#edc155;padding-left:6.5px">Ev…le</div>
<div style="left:701.0px;top:360.2px;width:1.0px;height:22.8px;background:#c9b8f2;"></div>
<div style="left:704.0px;top:360.2px;width:2.6px;height:22.8px;background:#edc155;"></div>
<div style="left:707.3px;top:360.2px;width:1.0px;height:22.8px;background:#c9b8f2;"></div>
<div style="left:716.5px;top:360.2px;width:3.5px;height:22.8px;background:#edc155;"></div>
<div class="b" style="left:721.0px;top:360.2px;width:234.5px;height:22.8px;background:#edc155;padding-left:6.5px">Run Microtasks</div>
<div style="left:959.0px;top:360.2px;width:2.0px;height:22.8px;background:#a48be8;"></div>
<div style="left:961.0px;top:360.2px;width:1.0px;height:22.8px;background:#c9b8f2;"></div>
<div style="left:962.0px;top:360.2px;width:3.0px;height:22.8px;background:#a48be8;"></div>
<div style="left:965.0px;top:360.2px;width:1.0px;height:22.8px;background:#c9b8f2;"></div>
<div style="left:966.0px;top:360.2px;width:3.0px;height:22.8px;background:#a48be8;"></div>
<div style="left:969.0px;top:360.2px;width:1.0px;height:22.8px;background:#c9b8f2;"></div>
<div style="left:970.0px;top:360.2px;width:2.5px;height:22.8px;background:#a48be8;"></div>
<div style="left:975.0px;top:360.2px;width:2.2px;height:22.8px;background:#6daf5e;"></div>
<div style="left:982.0px;top:360.2px;width:2.0px;height:22.8px;background:#6daf5e;"></div>
<div style="left:985.0px;top:360.2px;width:16.0px;height:22.8px;background:#edc155;"></div>
<div style="left:1001.0px;top:360.2px;width:2.0px;height:22.8px;background:#f5dea0;"></div>
<div class="b" style="left:1005.0px;top:360.2px;width:38.5px;height:22.8px;background:#edc155;padding-left:6.5px">F…</div>
<div style="left:1045.0px;top:360.2px;width:9.0px;height:22.8px;background:#edc155;"></div>
<div style="left:1054.0px;top:360.2px;width:2.0px;height:22.8px;background:#f5dea0;"></div>
<div style="left:1057.0px;top:360.2px;width:4.5px;height:22.8px;background:#edc155;"></div>
<div style="left:1062.0px;top:360.2px;width:1.5px;height:22.8px;background:#f5dea0;"></div>
<div style="left:1064.5px;top:360.2px;width:32.5px;height:22.8px;background:#edc155;"></div>
<div style="left:1098.5px;top:360.2px;width:6.5px;height:22.8px;background:#edc155;"></div>
<div style="left:1106.5px;top:360.2px;width:8.0px;height:22.8px;background:#edc155;"></div>
<div style="left:1116.0px;top:360.2px;width:2.0px;height:22.8px;background:#f5dea0;"></div>
<div style="left:1119.0px;top:360.2px;width:2.0px;height:22.8px;background:#edc155;"></div>
<div style="left:1122.0px;top:360.2px;width:1.0px;height:22.8px;background:#edc155;"></div>
<div style="left:1124.0px;top:360.2px;width:3.6px;height:22.8px;background:#edc155;"></div>
<div style="left:1131.0px;top:360.2px;width:2.5px;height:22.8px;background:#a48be8;"></div>
<div style="left:1133.5px;top:360.2px;width:1.0px;height:22.8px;background:#c9b8f2;"></div>
<div style="left:1134.5px;top:360.2px;width:3.1px;height:22.8px;background:#a48be8;"></div>
<div style="left:1141.0px;top:360.2px;width:2.0px;height:22.8px;background:#a48be8;"></div>
<div style="left:1143.0px;top:360.2px;width:1.0px;height:22.8px;background:#c9b8f2;"></div>
<div style="left:1144.0px;top:360.2px;width:1.2px;height:22.8px;background:#a48be8;"></div>
<div style="left:1145.6px;top:360.2px;width:0.8px;height:22.8px;background:#c9b8f2;"></div>
<div style="left:1147.8px;top:360.2px;width:1.2px;height:22.8px;background:#6daf5e;"></div>
<div style="left:1154.0px;top:360.2px;width:2.0px;height:22.8px;background:#6daf5e;"></div>
<div style="left:1156.5px;top:360.2px;width:2.5px;height:22.8px;background:#edc155;"></div>
<div style="left:1163.8px;top:360.2px;width:1.0px;height:22.8px;background:#edc155;"></div>
<div class="b" style="left:0.0px;top:384.6px;width:62.6px;height:22.8px;background:#c9efc0;padding-left:5.5px">build</div>
<div style="left:66.0px;top:384.6px;width:5.3px;height:22.8px;background:#c9efc0;"></div>
<div class="b" style="left:72.9px;top:384.6px;width:121.1px;height:22.8px;background:#c9efc0;padding-left:8.1px">generate</div>
<div style="left:195.0px;top:384.6px;width:13.8px;height:22.8px;background:#c9efc0;"></div>
<div class="b" style="left:209.5px;top:384.6px;width:85.1px;height:22.8px;background:#c9efc0;padding-left:8.2px">(an…us)</div>
<div style="left:297.3px;top:384.6px;width:17.5px;height:22.8px;background:#edc155;"></div>
<div style="left:370.0px;top:384.6px;width:6.5px;height:22.8px;background:#edc155;"></div>
<div style="left:377.2px;top:384.6px;width:0.8px;height:22.8px;background:#f5dea0;"></div>
<div class="b" style="left:378.5px;top:384.6px;width:152.5px;height:22.8px;background:#edc155;padding-left:8.5px">Function Call</div>
<div style="left:533.0px;top:384.6px;width:4.0px;height:22.8px;background:#f5dea0;"></div>
<div style="left:599.2px;top:384.6px;width:2.8px;height:22.8px;background:#c9b8f2;"></div>
<div style="left:629.0px;top:384.6px;width:7.0px;height:22.8px;background:#edc155;"></div>
<div class="b" style="left:642.0px;top:384.6px;width:58.0px;height:22.8px;background:#f2e9c0;padding-left:6.5px">(a…s)</div>
<div style="left:703.5px;top:384.6px;width:1.0px;height:22.8px;background:#edc155;"></div>
<div style="left:718.0px;top:384.6px;width:2.0px;height:22.8px;background:#b5f5e2;"></div>
<div style="left:720.5px;top:384.6px;width:1.0px;height:22.8px;background:#e9e9dc;"></div>
<div class="b" style="left:722.0px;top:384.6px;width:233.5px;height:22.8px;background:#f2e9c0;padding-left:7.0px;letter-spacing:-0.1px">(anonymous)</div>
<div style="left:975.0px;top:384.6px;width:1.0px;height:22.8px;background:#6daf5e;"></div>
<div style="left:986.0px;top:384.6px;width:15.0px;height:22.8px;background:#bfe6f1;"></div>
<div class="b" style="left:1006.0px;top:384.6px;width:38.0px;height:22.8px;background:#bfe6f1;padding-left:7.0px">s…</div>
<div style="left:1046.0px;top:384.6px;width:5.0px;height:22.8px;background:#edc155;"></div>
<div style="left:1053.0px;top:384.6px;width:1.0px;height:22.8px;background:#f5dea0;"></div>
<div style="left:1055.0px;top:384.6px;width:1.0px;height:22.8px;background:#f5dea0;"></div>
<div style="left:1059.0px;top:384.6px;width:2.5px;height:22.8px;background:#cdf7ec;"></div>
<div style="left:1063.5px;top:384.6px;width:1.5px;height:22.8px;background:#f5dea0;"></div>
<div style="left:1068.0px;top:384.6px;width:29.5px;height:22.8px;background:#bfe6f1;"></div>
<div style="left:1098.0px;top:384.6px;width:4.0px;height:22.8px;background:#edc155;"></div>
<div style="left:1102.0px;top:384.6px;width:3.0px;height:22.8px;background:#f5dea0;"></div>
<div style="left:1108.0px;top:384.6px;width:6.5px;height:22.8px;background:#bfe6f1;"></div>
<div style="left:1118.0px;top:384.6px;width:1.0px;height:22.8px;background:#c9b8f2;"></div>
<div style="left:1121.0px;top:384.6px;width:2.5px;height:22.8px;background:#f5dea0;"></div>
<div style="left:1125.0px;top:384.6px;width:2.6px;height:22.8px;background:#f6b6f5;"></div>
<div style="left:1158.0px;top:384.6px;width:0.8px;height:22.8px;background:#f5dea0;"></div>
<div style="left:1163.8px;top:384.6px;width:1.0px;height:22.8px;background:#edc155;"></div>
<div class="b" style="left:0.0px;top:408.9px;width:62.6px;height:22.8px;background:#c9efc0;padding-left:5.5px">in…ts</div>
<div style="left:63.6px;top:408.9px;width:1.4px;height:22.8px;background:#c9efc0;"></div>
<div style="left:66.0px;top:408.9px;width:4.0px;height:22.8px;background:#c9efc0;"></div>
<div style="left:71.0px;top:408.9px;width:1.0px;height:22.8px;background:#c9efc0;"></div>
<div class="b" style="left:72.9px;top:408.9px;width:117.1px;height:22.8px;background:#c9efc0;padding-left:8.1px">prere…hunks</div>
<div style="left:191.0px;top:408.9px;width:3.0px;height:22.8px;background:#c9efc0;"></div>
<div style="left:195.0px;top:408.9px;width:13.8px;height:22.8px;background:#c9efc0;"></div>
<div style="left:209.5px;top:408.9px;width:6.0px;height:22.8px;background:#dcf5d6;"></div>
<div class="b" style="left:216.5px;top:408.9px;width:51.0px;height:22.8px;background:#c9efc0;padding-left:6.5px">cr…l</div>
<div style="left:268.0px;top:408.9px;width:2.5px;height:22.8px;background:#c9efc0;"></div>
<div style="left:270.9px;top:408.9px;width:23.7px;height:22.8px;background:#ecd7c4;"></div>
<div style="left:296.6px;top:408.9px;width:1.0px;height:22.8px;background:#a9c6f0;"></div>
<div style="left:299.7px;top:408.9px;width:15.1px;height:22.8px;background:#e1ebc3;"></div>
<div style="left:371.5px;top:408.9px;width:1.1px;height:22.8px;background:#f6b6f5;"></div>
<div style="left:373.2px;top:408.9px;width:5.0px;height:22.8px;background:#dcf5d6;"></div>
<div class="b" style="left:380.0px;top:408.9px;width:151.0px;height:22.8px;background:#b9d3f7;padding-left:7.5px;letter-spacing:-0.1px">(anonymous)</div>
<div style="left:631.0px;top:408.9px;width:5.0px;height:22.8px;background:#edc155;"></div>
<div style="left:662.0px;top:408.9px;width:24.0px;height:22.8px;background:#edc155;"></div>
<div style="left:687.8px;top:408.9px;width:1.0px;height:22.8px;background:#a9c6f0;"></div>
<div style="left:699.5px;top:408.9px;width:1.1px;height:22.8px;background:#a9c6f0;"></div>
<div style="left:705.0px;top:408.9px;width:1.0px;height:22.8px;background:#f6b6f5;"></div>
<div style="left:718.0px;top:408.9px;width:1.3px;height:22.8px;background:#edc155;"></div>
<div style="left:719.9px;top:408.9px;width:1.3px;height:22.8px;background:#edc155;"></div>
<div style="left:721.8px;top:408.9px;width:1.3px;height:22.8px;background:#edc155;"></div>
<div style="left:723.7px;top:408.9px;width:1.3px;height:22.8px;background:#edc155;"></div>
<div style="left:725.6px;top:408.9px;width:1.3px;height:22.8px;background:#edc155;"></div>
<div style="left:718.0px;top:408.9px;width:9.8px;height:22.8px;background:rgba(237,193,85,.45);"></div>
<div class="b" style="left:728.0px;top:408.9px;width:227.5px;height:22.8px;background:#b5f5e2;padding-left:7.0px">action</div>
<div style="left:996.5px;top:408.9px;width:1.0px;height:22.8px;background:#f6b6f5;"></div>
<div class="b" style="left:1006.0px;top:408.9px;width:38.0px;height:22.8px;background:#ecc6e6;padding-left:7.0px">(…</div>
<div style="left:1048.0px;top:408.9px;width:3.5px;height:22.8px;background:#c9efc0;"></div>
<div style="left:1055.0px;top:408.9px;width:1.0px;height:22.8px;background:#c0d4f2;"></div>
<div style="left:1059.0px;top:408.9px;width:2.5px;height:22.8px;background:#f9d0f2;"></div>
<div style="left:1063.5px;top:408.9px;width:1.5px;height:22.8px;background:#f9d0f2;"></div>
<div style="left:1068.0px;top:408.9px;width:29.5px;height:22.8px;background:#ecc6e6;"></div>
<div style="left:1099.0px;top:408.9px;width:2.5px;height:22.8px;background:#c9efc0;"></div>
<div style="left:1102.5px;top:408.9px;width:1.0px;height:22.8px;background:#c0d4f2;"></div>
<div style="left:1108.0px;top:408.9px;width:2.0px;height:22.8px;background:#c9efc0;"></div>
<div style="left:1111.0px;top:408.9px;width:3.5px;height:22.8px;background:#ecc6e6;"></div>
<div style="left:1124.0px;top:408.9px;width:1.5px;height:22.8px;background:#edc155;"></div>
<div style="left:1125.5px;top:408.9px;width:2.1px;height:22.8px;background:#f6b6f5;"></div>
<div style="left:1163.8px;top:408.9px;width:1.0px;height:22.8px;background:#dcf5d6;"></div>
<div class="b" style="left:0.0px;top:433.2px;width:62.6px;height:22.8px;background:#c9efc0;padding-left:5.5px">in…de</div>
<div style="left:72.0px;top:433.2px;width:1.5px;height:22.8px;background:#c9efc0;"></div>
<div class="b" style="left:74.5px;top:433.2px;width:134.3px;height:22.8px;background:#c9efc0;padding-left:7.0px">preRender</div>
<div style="left:210.3px;top:433.2px;width:3.7px;height:22.8px;background:#f6b4ee;"></div>
<div style="left:214.3px;top:433.2px;width:1.3px;height:22.8px;background:#f3e5d9;"></div>
<div style="left:229.3px;top:433.2px;width:2.2px;height:22.8px;background:#f3e5d9;"></div>
<div style="left:233.8px;top:433.2px;width:30.2px;height:22.8px;background:#ecd7c4;"></div>
<div style="left:264.8px;top:433.2px;width:1.7px;height:22.8px;background:#f3e5d9;"></div>
<div style="left:268.0px;top:433.2px;width:1.2px;height:22.8px;background:#f5dea0;"></div>
<div style="left:275.0px;top:433.2px;width:1.2px;height:22.8px;background:#c9b8f2;"></div>
<div style="left:282.0px;top:433.2px;width:1.5px;height:22.8px;background:#a9c6f0;"></div>
<div style="left:285.0px;top:433.2px;width:1.0px;height:22.8px;background:#f5dea0;"></div>
<div style="left:286.5px;top:433.2px;width:1.3px;height:22.8px;background:#edc155;"></div>
<div style="left:289.5px;top:433.2px;width:5.1px;height:22.8px;background:#edc155;"></div>
<div style="left:296.6px;top:433.2px;width:1.0px;height:22.8px;background:#dbe7f8;"></div>
<div style="left:314.0px;top:433.2px;width:1.0px;height:22.8px;background:#e1ebc3;"></div>
<div style="left:372.0px;top:433.2px;width:1.4px;height:22.8px;background:#9fd79b;"></div>
<div style="left:374.0px;top:433.2px;width:4.5px;height:22.8px;background:#dcf5d6;"></div>
<div class="b" style="left:380.0px;top:433.2px;width:151.0px;height:22.8px;background:#b9d3f7;padding-left:8.0px">ys</div>
<div style="left:662.0px;top:433.2px;width:24.0px;height:22.8px;background:#edc155;"></div>
<div style="left:705.0px;top:433.2px;width:1.0px;height:22.8px;background:#f6b6f5;"></div>
<div style="left:728.0px;top:433.2px;width:8.0px;height:22.8px;background:#b5f5e2;"></div>
<div style="left:737.0px;top:433.2px;width:1.3px;height:22.8px;background:#f5dea0;"></div>
<div style="left:738.3px;top:433.2px;width:2.3px;height:22.8px;background:#edc155;"></div>
<div class="b" style="left:741.0px;top:433.2px;width:214.5px;height:22.8px;background:#b5f5e2;padding-left:7.0px">showApp</div>
<div style="left:996.5px;top:433.2px;width:1.0px;height:22.8px;background:#f6b6f5;"></div>
<div class="b" style="left:1006.5px;top:433.2px;width:37.5px;height:22.8px;background:#c5ebc8;padding-left:7.5px">s…</div>
<div style="left:1048.0px;top:433.2px;width:3.5px;height:22.8px;background:#c9efc0;"></div>
<div style="left:1055.0px;top:433.2px;width:1.0px;height:22.8px;background:#c0d4f2;"></div>
<div style="left:1064.0px;top:433.2px;width:1.5px;height:22.8px;background:#f3e5d9;"></div>
<div style="left:1068.0px;top:433.2px;width:23.5px;height:22.8px;background:#c5ebc8;"></div>
<div style="left:1092.0px;top:433.2px;width:5.2px;height:22.8px;background:#f6b6f5;"></div>
<div style="left:1099.0px;top:433.2px;width:2.5px;height:22.8px;background:#dcf5d6;"></div>
<div style="left:1102.5px;top:433.2px;width:1.0px;height:22.8px;background:#c0d4f2;"></div>
<div style="left:1108.0px;top:433.2px;width:2.0px;height:22.8px;background:#edc155;"></div>
<div style="left:1110.5px;top:433.2px;width:4.0px;height:22.8px;background:#f6b6f5;"></div>
<div style="left:1125.0px;top:433.2px;width:2.3px;height:22.8px;background:#f6b6f5;"></div>
<div style="left:1163.8px;top:433.2px;width:0.8px;height:22.8px;background:#f3e5d9;"></div>
<div style="left:0.0px;top:457.5px;width:22.0px;height:22.8px;background:#c9efc0;"></div>
<div class="b" style="left:24.4px;top:457.5px;width:37.1px;height:22.8px;background:#c9efc0;padding-left:6.6px">i…</div>
<div style="left:62.3px;top:457.5px;width:1.7px;height:22.8px;background:#c9efc0;"></div>
<div style="left:72.5px;top:457.5px;width:1.0px;height:22.8px;background:#c9efc0;"></div>
<div style="left:75.4px;top:457.5px;width:20.4px;height:22.8px;background:#c9efc0;"></div>
<div style="left:96.0px;top:457.5px;width:1.5px;height:22.8px;background:#dcf5d6;"></div>
<div style="left:99.5px;top:457.5px;width:40.3px;height:22.8px;background:#c9efc0;"></div>
<div style="left:140.4px;top:457.5px;width:0.8px;height:22.8px;background:#dcf5d6;"></div>
<div style="left:119.2px;top:457.5px;width:0.7px;height:22.8px;background:rgba(255,255,255,.4);"></div>
<div style="left:120.9px;top:457.5px;width:0.7px;height:22.8px;background:rgba(255,255,255,.4);"></div>
<div style="left:123.7px;top:457.5px;width:0.7px;height:22.8px;background:rgba(255,255,255,.4);"></div>
<div class="b" style="left:141.9px;top:457.5px;width:46.1px;height:22.8px;background:#c9efc0;padding-left:7.1px">r…r</div>
<div style="left:189.0px;top:457.5px;width:1.5px;height:22.8px;background:#dcf5d6;"></div>
<div style="left:195.3px;top:457.5px;width:13.2px;height:22.8px;background:#c9efc0;"></div>
<div style="left:209.4px;top:457.5px;width:1.2px;height:22.8px;background:#dcf5d6;"></div>
<div style="left:292.0px;top:457.5px;width:2.6px;height:22.8px;background:#dcf5d6;"></div>
<div style="left:296.5px;top:457.5px;width:1.0px;height:22.8px;background:#f3e5d9;"></div>
<div style="left:372.6px;top:457.5px;width:1.4px;height:22.8px;background:#f3e5d9;"></div>
<div style="left:377.5px;top:457.5px;width:1.5px;height:22.8px;background:#f3e5d9;"></div>
<div class="b" style="left:380.0px;top:457.5px;width:52.0px;height:22.8px;background:#b9d3f7;padding-left:8.0px">bs</div>
<div style="left:434.5px;top:457.5px;width:10.5px;height:22.8px;background:#b9d3f7;"></div>
<div class="b" style="left:448.7px;top:457.5px;width:59.3px;height:22.8px;background:#b9d3f7;padding-left:7.0px">bs</div>
<div style="left:510.5px;top:457.5px;width:20.5px;height:22.8px;background:#b9d3f7;"></div>
<div style="left:705.0px;top:457.5px;width:1.0px;height:22.8px;background:#f6b6f5;"></div>
<div style="left:728.0px;top:457.5px;width:6.6px;height:22.8px;background:#b5f5e2;"></div>
<div style="left:735.5px;top:457.5px;width:1.1px;height:22.8px;background:#f3edc9;"></div>
<div class="b" style="left:741.0px;top:457.5px;width:214.5px;height:22.8px;background:#b5f5e2;padding-left:7.0px">Component</div>
<div style="left:996.5px;top:457.5px;width:1.0px;height:22.8px;background:#f6b6f5;"></div>
<div style="left:1006.5px;top:457.5px;width:37.5px;height:22.8px;background:#c5ebc8;"></div>
<div style="left:1048.0px;top:457.5px;width:3.5px;height:22.8px;background:#c9efc0;"></div>
<div style="left:1055.0px;top:457.5px;width:1.0px;height:22.8px;background:#f3e5d9;"></div>
<div style="left:1065.0px;top:457.5px;width:1.2px;height:22.8px;background:#edc155;"></div>
<div style="left:1068.0px;top:457.5px;width:23.5px;height:22.8px;background:#c5ebc8;"></div>
<div style="left:1092.0px;top:457.5px;width:5.2px;height:22.8px;background:#f6b6f5;"></div>
<div style="left:1099.0px;top:457.5px;width:3.0px;height:22.8px;background:#dcf5d6;"></div>
<div style="left:1102.0px;top:457.5px;width:1.0px;height:22.8px;background:#f3e5d9;"></div>
<div style="left:1108.0px;top:457.5px;width:6.5px;height:22.8px;background:#f6b6f5;"></div>
<div style="left:1125.0px;top:457.5px;width:1.0px;height:22.8px;background:#edc155;"></div>
<div style="left:1126.0px;top:457.5px;width:1.3px;height:22.8px;background:#f6b6f5;"></div>
<div style="left:0.0px;top:481.9px;width:22.0px;height:22.8px;background:#c9efc0;"></div>
<div style="left:24.4px;top:481.9px;width:37.1px;height:22.8px;background:#c9efc0;"></div>
<div style="left:62.5px;top:481.9px;width:1.5px;height:22.8px;background:#c9efc0;"></div>
<div style="left:75.4px;top:481.9px;width:20.4px;height:22.8px;background:#c9efc0;"></div>
<div style="left:97.5px;top:481.9px;width:2.0px;height:22.8px;background:#c9efc0;"></div>
<div style="left:100.5px;top:481.9px;width:39.3px;height:22.8px;background:#c9efc0;"></div>
<div style="left:141.9px;top:481.9px;width:46.1px;height:22.8px;background:#c9efc0;"></div>
<div style="left:195.3px;top:481.9px;width:11.2px;height:22.8px;background:#c9efc0;"></div>
<div style="left:2.5px;top:481.9px;width:1.0px;height:22.8px;background:rgba(255,255,255,.7);"></div>
<div style="left:7.1px;top:481.9px;width:1.0px;height:22.8px;background:rgba(255,255,255,.7);"></div>
<div style="left:12.0px;top:481.9px;width:1.0px;height:22.8px;background:rgba(255,255,255,.7);"></div>
<div style="left:13.4px;top:481.9px;width:1.0px;height:22.8px;background:rgba(255,255,255,.7);"></div>
<div style="left:35.0px;top:481.9px;width:1.0px;height:22.8px;background:rgba(255,255,255,.7);"></div>
<div style="left:38.0px;top:481.9px;width:1.0px;height:22.8px;background:rgba(255,255,255,.7);"></div>
<div style="left:41.0px;top:481.9px;width:1.0px;height:22.8px;background:rgba(255,255,255,.7);"></div>
<div style="left:47.5px;top:481.9px;width:1.0px;height:22.8px;background:rgba(255,255,255,.7);"></div>
<div style="left:50.0px;top:481.9px;width:1.0px;height:22.8px;background:rgba(255,255,255,.7);"></div>
<div style="left:55.5px;top:481.9px;width:1.0px;height:22.8px;background:rgba(255,255,255,.7);"></div>
<div style="left:104.0px;top:481.9px;width:1.0px;height:22.8px;background:rgba(255,255,255,.7);"></div>
<div style="left:119.5px;top:481.9px;width:1.0px;height:22.8px;background:rgba(255,255,255,.7);"></div>
<div style="left:124.0px;top:481.9px;width:1.0px;height:22.8px;background:rgba(255,255,255,.7);"></div>
<div style="left:128.0px;top:481.9px;width:1.0px;height:22.8px;background:rgba(255,255,255,.7);"></div>
<div style="left:152.5px;top:481.9px;width:1.0px;height:22.8px;background:rgba(255,255,255,.7);"></div>
<div style="left:167.1px;top:481.9px;width:1.0px;height:22.8px;background:rgba(255,255,255,.7);"></div>
<div style="left:180.0px;top:481.9px;width:1.0px;height:22.8px;background:rgba(255,255,255,.7);"></div>
<div style="left:183.5px;top:481.9px;width:1.0px;height:22.8px;background:rgba(255,255,255,.7);"></div>
<div style="left:207.0px;top:481.9px;width:1.6px;height:22.8px;background:#ecd7c4;"></div>
<div style="left:209.4px;top:481.9px;width:1.2px;height:22.8px;background:#dcf5d6;"></div>
<div style="left:292.0px;top:481.9px;width:2.6px;height:22.8px;background:#dcf5d6;"></div>
<div style="left:374.0px;top:481.9px;width:1.4px;height:22.8px;background:#edc155;"></div>
<div style="left:380.0px;top:481.9px;width:3.6px;height:22.8px;background:#f3e5d9;"></div>
<div style="left:388.0px;top:481.9px;width:2.5px;height:22.8px;background:#f3e5d9;"></div>
<div style="left:392.5px;top:481.9px;width:1.0px;height:22.8px;background:#f3e5d9;"></div>
<div style="left:401.0px;top:481.9px;width:2.5px;height:22.8px;background:#f3e5d9;"></div>
<div style="left:453.1px;top:481.9px;width:0.9px;height:22.8px;background:#f3e5d9;"></div>
<div style="left:460.1px;top:481.9px;width:0.9px;height:22.8px;background:#f3e5d9;"></div>
<div style="left:466.1px;top:481.9px;width:0.9px;height:22.8px;background:#f3e5d9;"></div>
<div style="left:487.1px;top:481.9px;width:0.9px;height:22.8px;background:#f3e5d9;"></div>
<div style="left:510.6px;top:481.9px;width:0.9px;height:22.8px;background:#f3e5d9;"></div>
<div style="left:728.0px;top:481.9px;width:6.6px;height:22.8px;background:#ecd7c4;"></div>
<div class="b" style="left:741.0px;top:481.9px;width:214.5px;height:22.8px;background:#b5f5e2;padding-left:7.0px">init</div>
<div style="left:996.5px;top:481.9px;width:1.0px;height:22.8px;background:#f6b6f5;"></div>
<div class="b" style="left:1007.5px;top:481.9px;width:36.5px;height:22.8px;background:#c0d4f2;padding-left:6.5px">(…</div>
<div style="left:1048.0px;top:481.9px;width:3.5px;height:22.8px;background:#c9efc0;"></div>
<div style="left:1068.0px;top:481.9px;width:23.5px;height:22.8px;background:#c0d4f2;"></div>
<div style="left:1092.0px;top:481.9px;width:5.2px;height:22.8px;background:#f6b6f5;"></div>
<div style="left:1099.0px;top:481.9px;width:3.0px;height:22.8px;background:#dcf5d6;"></div>
<div style="left:1108.0px;top:481.9px;width:6.5px;height:22.8px;background:#f6b6f5;"></div>
<div style="left:1126.0px;top:481.9px;width:1.5px;height:22.8px;background:#f9d0f2;"></div>
<div style="left:0.0px;top:506.2px;width:22.0px;height:8.8px;background:#c9efc0;"></div>
<div style="left:24.4px;top:506.2px;width:37.1px;height:8.8px;background:#c9efc0;"></div>
<div style="left:62.5px;top:506.2px;width:1.5px;height:8.8px;background:#c9efc0;"></div>
<div style="left:76.3px;top:506.2px;width:10.7px;height:8.8px;background:#c9efc0;"></div>
<div style="left:89.0px;top:506.2px;width:6.8px;height:8.8px;background:#c9efc0;"></div>
<div style="left:97.5px;top:506.2px;width:2.0px;height:8.8px;background:#c9efc0;"></div>
<div style="left:100.5px;top:506.2px;width:23.7px;height:8.8px;background:#c9efc0;"></div>
<div style="left:126.0px;top:506.2px;width:13.8px;height:8.8px;background:#c9efc0;"></div>
<div style="left:141.9px;top:506.2px;width:46.1px;height:8.8px;background:#c9efc0;"></div>
<div style="left:200.5px;top:506.2px;width:5.5px;height:8.8px;background:#c9efc0;"></div>
<div style="left:2.5px;top:506.2px;width:1.0px;height:8.8px;background:rgba(255,255,255,.7);"></div>
<div style="left:6.9px;top:506.2px;width:1.0px;height:8.8px;background:rgba(255,255,255,.7);"></div>
<div style="left:9.5px;top:506.2px;width:1.0px;height:8.8px;background:rgba(255,255,255,.7);"></div>
<div style="left:12.0px;top:506.2px;width:1.0px;height:8.8px;background:rgba(255,255,255,.7);"></div>
<div style="left:15.9px;top:506.2px;width:1.0px;height:8.8px;background:rgba(255,255,255,.7);"></div>
<div style="left:35.0px;top:506.2px;width:1.0px;height:8.8px;background:rgba(255,255,255,.7);"></div>
<div style="left:38.0px;top:506.2px;width:1.0px;height:8.8px;background:rgba(255,255,255,.7);"></div>
<div style="left:41.0px;top:506.2px;width:1.0px;height:8.8px;background:rgba(255,255,255,.7);"></div>
<div style="left:47.5px;top:506.2px;width:1.0px;height:8.8px;background:rgba(255,255,255,.7);"></div>
<div style="left:50.0px;top:506.2px;width:1.0px;height:8.8px;background:rgba(255,255,255,.7);"></div>
<div style="left:55.5px;top:506.2px;width:1.0px;height:8.8px;background:rgba(255,255,255,.7);"></div>
<div style="left:104.0px;top:506.2px;width:1.0px;height:8.8px;background:rgba(255,255,255,.7);"></div>
<div style="left:119.5px;top:506.2px;width:1.0px;height:8.8px;background:rgba(255,255,255,.7);"></div>
<div style="left:152.5px;top:506.2px;width:1.0px;height:8.8px;background:rgba(255,255,255,.7);"></div>
<div style="left:167.1px;top:506.2px;width:1.0px;height:8.8px;background:rgba(255,255,255,.7);"></div>
<div style="left:180.0px;top:506.2px;width:1.0px;height:8.8px;background:rgba(255,255,255,.7);"></div>
<div style="left:199.0px;top:506.2px;width:0.9px;height:8.8px;background:#edc155;"></div>
<div style="left:209.4px;top:506.2px;width:1.2px;height:8.8px;background:#dcf5d6;"></div>
<div style="left:212.5px;top:506.2px;width:1.5px;height:8.8px;background:#c9efc0;"></div>
<div style="left:292.0px;top:506.2px;width:2.6px;height:8.8px;background:#dcf5d6;"></div>
<div style="left:734.0px;top:506.2px;width:1.0px;height:8.8px;background:#edc155;"></div>
<div style="left:741.0px;top:506.2px;width:1.3px;height:8.8px;background:#edc155;"></div>
<div style="left:742.9px;top:506.2px;width:1.3px;height:8.8px;background:#edc155;"></div>
<div style="left:744.8px;top:506.2px;width:1.3px;height:8.8px;background:#edc155;"></div>
<div style="left:746.7px;top:506.2px;width:1.3px;height:8.8px;background:#edc155;"></div>
<div style="left:748.6px;top:506.2px;width:1.3px;height:8.8px;background:#edc155;"></div>
<div style="left:741.0px;top:506.2px;width:9.6px;height:8.8px;background:rgba(237,193,85,.45);"></div>
<div class="b" style="left:751.0px;top:506.2px;width:66.0px;height:8.8px;background:#b5f5e2;padding-left:7.0px;line-height:29.4px">sourcemap</div>
<div class="b" style="left:818.0px;top:506.2px;width:70.5px;height:8.8px;background:#b5f5e2;padding-left:7.0px;line-height:29.4px">run</div>
<div class="b" style="left:889.5px;top:506.2px;width:67.0px;height:8.8px;background:#b5f5e2;padding-left:6.5px;line-height:29.4px">rerend</div>
<div style="left:996.5px;top:506.2px;width:1.0px;height:8.8px;background:#f6b6f5;"></div>
<div class="b" style="left:1006.5px;top:506.2px;width:37.5px;height:8.8px;background:#f6e3b6;padding-left:7.5px;line-height:29.4px">s…</div>
<div style="left:1048.0px;top:506.2px;width:5.0px;height:8.8px;background:#c9efc0;"></div>
<div style="left:1068.0px;top:506.2px;width:23.5px;height:8.8px;background:#f6e3b6;"></div>
<div style="left:1092.0px;top:506.2px;width:5.2px;height:8.8px;background:#f6b6f5;"></div>
<div style="left:1098.5px;top:506.2px;width:1.0px;height:8.8px;background:#c9efc0;"></div>
<div style="left:1108.0px;top:506.2px;width:6.5px;height:8.8px;background:#f6b6f5;"></div>
<div style="left:1126.0px;top:506.2px;width:1.5px;height:8.8px;background:#f9d0f2;"></div>
<div style="left:1110.2px;top:457.5px;width:0.9px;height:22.8px;background:rgba(255,255,255,.55);"></div>
<div style="left:1110.2px;top:481.9px;width:0.9px;height:22.8px;background:rgba(255,255,255,.55);"></div>
<div style="left:1110.2px;top:506.2px;width:0.9px;height:8.8px;background:rgba(255,255,255,.55);"></div>
<div class="gl" style="left:63.03px;top:3.4px;height:513px"></div>
<div class="gl" style="left:166.23px;top:3.4px;height:513px"></div>
<div class="gl" style="left:269.43px;top:3.4px;height:513px"></div>
<div class="gl" style="left:372.63px;top:3.4px;height:513px"></div>
<div class="gl" style="left:475.83px;top:3.4px;height:513px"></div>
<div class="gl" style="left:579.03px;top:3.4px;height:513px"></div>
<div class="gl" style="left:682.23px;top:3.4px;height:513px"></div>
<div class="gl" style="left:785.43px;top:3.4px;height:513px"></div>
<div class="gl" style="left:888.63px;top:3.4px;height:513px"></div>
<div class="gl" style="left:991.83px;top:3.4px;height:513px"></div>
<div class="gl" style="left:1095.03px;top:3.4px;height:513px"></div>
<div class="gl" style="left:1198.23px;top:3.4px;height:513px"></div>
<div style="left:209.3px;top:8.5px;width:4.3px;height:508px;background:repeating-linear-gradient(180deg,rgba(105,105,105,.4) 0,rgba(105,105,105,.4) 3.8px,transparent 3.8px,transparent 8.6px)"></div>
<div style="left:897.4px;top:8.5px;width:4.3px;height:508px;background:repeating-linear-gradient(180deg,rgba(105,105,105,.4) 0,rgba(105,105,105,.4) 3.8px,transparent 3.8px,transparent 8.6px)"></div>
<div style="left:1069.3px;top:8.5px;width:4.3px;height:508px;background:repeating-linear-gradient(180deg,rgba(105,105,105,.4) 0,rgba(105,105,105,.4) 3.8px,transparent 3.8px,transparent 8.6px)"></div>
<div style="left:208.2px;top:3.0px;width:693.6px;height:28.7px;border:3px solid #d92a1e"></div>
<div style="left:3.1px;top:9px;width:81px;height:18.6px;background:#f5f8fd"></div>
<div style="left:0;top:2.9px;width:12.9px;height:25px;border:3px solid #2b6fd8;border-right:none;border-left-width:1.1px"></div>
<div style="left:6.7px;top:13.3px;width:0;height:0;border-top:9.9px solid #6e6e6e;border-left:6.3px solid transparent;border-right:6.3px solid transparent"></div>
<div class="t" style="left:23.6px;top:8.7px;font-size:15.5px;letter-spacing:.05px;color:#303030">Frames</div>
<div style="left:1266.7px;top:3.0px;width:2.3px;height:513.0px;background:#fff;"></div>
<div style="left:1267.6px;top:9.7px;width:1.4px;height:111.0px;background:#e7e9ec;"></div>
<div style="left:0.0px;top:515.0px;width:1269.0px;height:1.0px;background:#c8c8cd;"></div>
</div></body></html>
